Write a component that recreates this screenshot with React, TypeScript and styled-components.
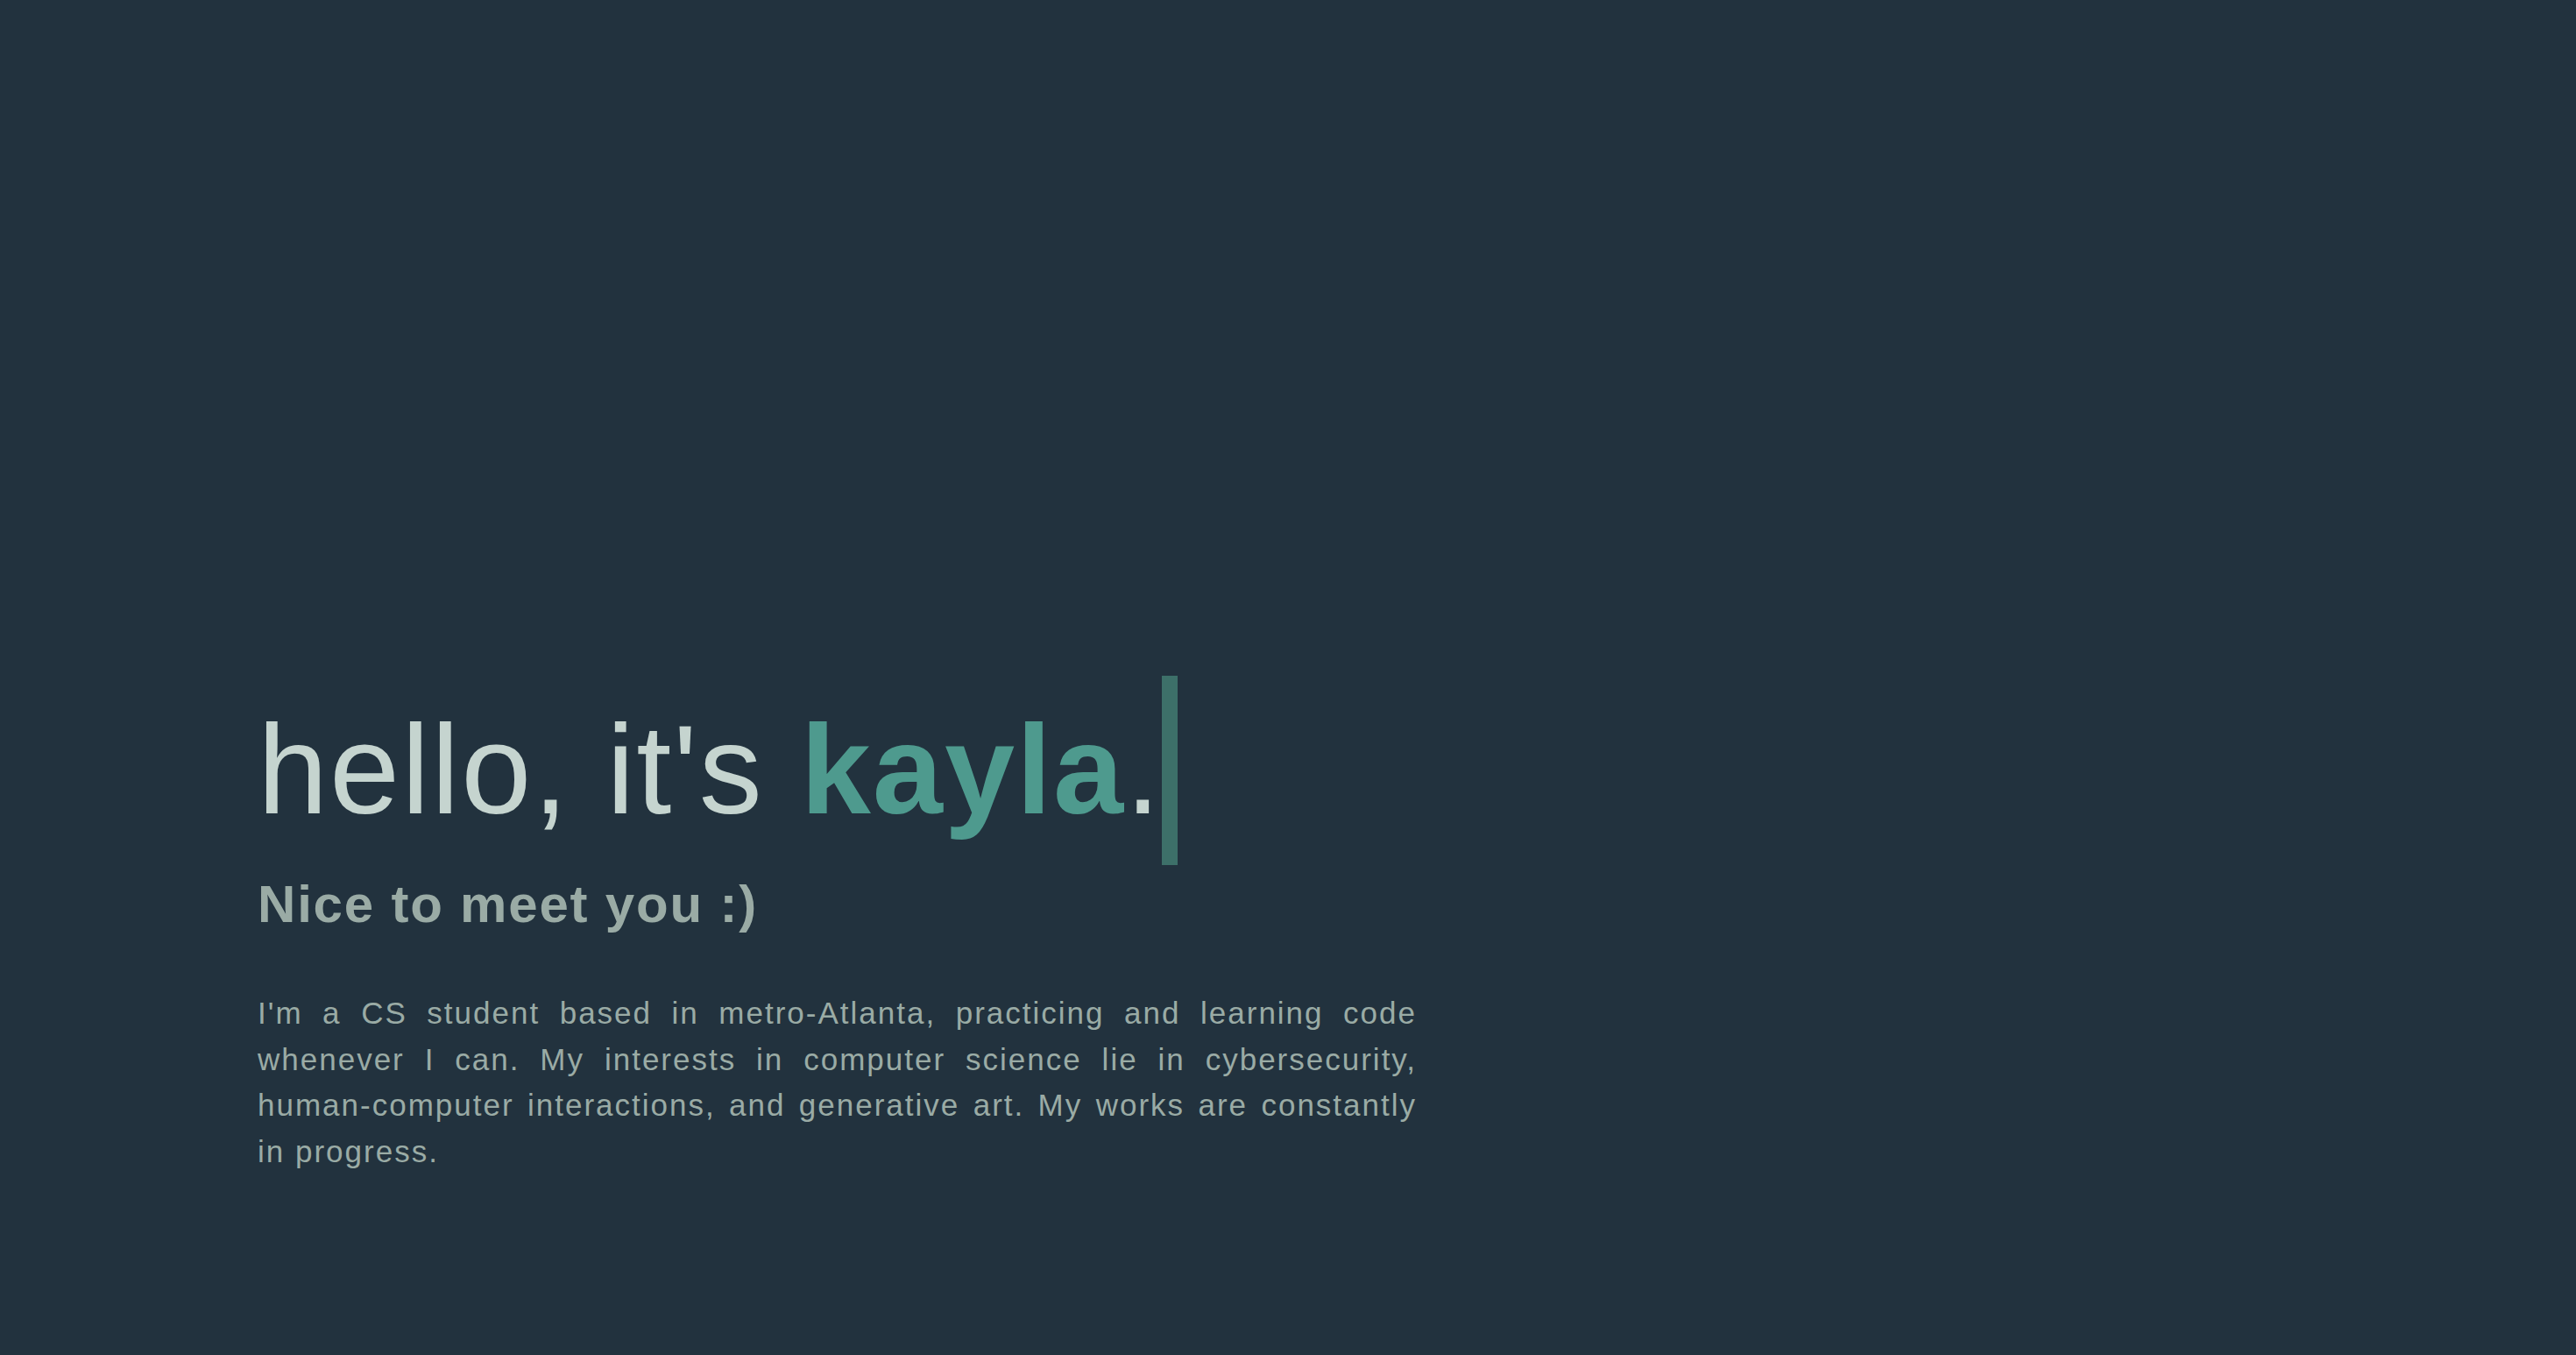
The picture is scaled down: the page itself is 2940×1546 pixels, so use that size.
import React from "react";
import styled, { createGlobalStyle } from "styled-components";

const GlobalStyle = createGlobalStyle`
  html, body {
    margin: 0;
    padding: 0;
    background: #22323e;
  }
  body {
    font-family: "Liberation Sans", Arial, Helvetica, sans-serif;
  }
  * { box-sizing: border-box; }
`;

const Hero = styled.section`
  min-height: 100vh;
  display: flex;
  flex-direction: column;
  align-items: flex-start;
  padding: 771px 0 0 294px;
  background: #22323e;
`;

const Title = styled.h1`
  display: inline-block;
  margin: 0;
  font-size: 144px;
  line-height: 1.5;
  font-weight: 400;
  letter-spacing: 2px;
  color: #c5d4cf;
  border-right: 18px solid #3d7069;
  white-space: nowrap;
`;

const Name = styled.span`
  font-weight: 700;
  color: #4e9a8e;
`;

const Subtitle = styled.h2`
  margin: 9px 0 0;
  font-size: 60px;
  line-height: 1.2;
  font-weight: 700;
  letter-spacing: 1.8px;
  color: #9aaba5;
`;

const Intro = styled.p`
  margin: 62px 0 0;
  width: 1323px;
  font-size: 35px;
  line-height: 1.5;
  letter-spacing: 2px;
  text-align: justify;
  color: #9aaba5;
`;

export default function App() {
  return (
    <>
      <GlobalStyle />
      <Hero>
        <Title>
          hello, it's <Name>kayla</Name>.
        </Title>
        <Subtitle>Nice to meet you :)</Subtitle>
        <Intro>
          I'm a CS student based in metro-Atlanta, practicing and learning code
          whenever I can. My interests in computer science lie in
          cybersecurity, human-computer interactions, and generative art. My
          works are constantly in progress.
        </Intro>
      </Hero>
    </>
  );
}
